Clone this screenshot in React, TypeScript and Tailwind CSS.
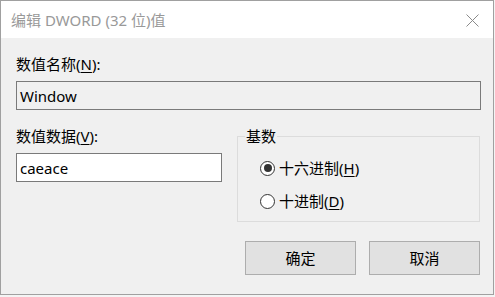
const ui = '"Noto Sans", "Noto Sans CJK SC", sans-serif';

function Accel({ k }: { k: string }) {
  return <span className="underline underline-offset-2 decoration-1">{k}</span>;
}

function Radio({ checked, label, k }: { checked?: boolean; label: string; k: string }) {
  return (
    <div className="flex h-[20px] items-center">
      <span className="ml-[22px] flex h-[15px] w-[15px] items-center justify-center rounded-full border border-[#333] bg-white">
        {checked && <span className="h-[8px] w-[8px] rounded-full bg-[#333]" />}
      </span>
      <span className="ml-[4px]">
        {label}(<Accel k={k} />)
      </span>
    </div>
  );
}

export default function App() {
  return (
    <div className="h-[297px] w-[495px] bg-[#f4f4f4]" style={{ fontFamily: ui }}>
      <div className="flex h-[295px] w-[494px] flex-col border border-[#a0a0a0] text-[15px] leading-[20px] text-black">
        <div className="flex h-[37px] items-center justify-between bg-white pl-[10px] pr-[14px] text-[#999]">
          <span>编辑 DWORD (32 位)值</span>
          <svg width="13" height="13" viewBox="0 0 13 13" className="mt-[1px]">
            <path d="M0.5 0.5L12.5 12.5M12.5 0.5L0.5 12.5" stroke="#8a8a8a" strokeWidth="1" />
          </svg>
        </div>
        <div className="flex-1 bg-[#f0f0f0] pl-[15px] pt-[16px]">
          <div>
            数值名称(<Accel k="N" />):
          </div>
          <div className="mt-[7px] flex h-[29px] w-[465px] items-center border border-[#7a7a7a] bg-[#f0f0f0] pl-[3px]">
            Window
          </div>
          <div className="mt-[16px] flex gap-[15px]">
            <div className="w-[206px]">
              <div>
                数值数据(<Accel k="V" />):
              </div>
              <div className="mt-[7px] flex h-[29px] items-center border border-[#7a7a7a] bg-white pl-[3px]">
                caeace
              </div>
            </div>
            <div className="w-[243px]">
              <fieldset className="border border-[#dcdcdc] pb-[10px]">
                <legend className="ml-[7px] px-px">基数</legend>
                <div className="flex flex-col gap-[13px] pt-[12px]">
                  <Radio checked label="十六进制" k="H" />
                  <Radio label="十进制" k="D" />
                </div>
              </fieldset>
              <div className="mt-[19px] flex gap-[13px] pl-[8px]">
                <button className="h-[34px] w-[111px] border border-[#adadad] bg-[#e1e1e1]">确定</button>
                <button className="h-[34px] w-[111px] border border-[#adadad] bg-[#e1e1e1]">取消</button>
              </div>
            </div>
          </div>
        </div>
      </div>
    </div>
  );
}
